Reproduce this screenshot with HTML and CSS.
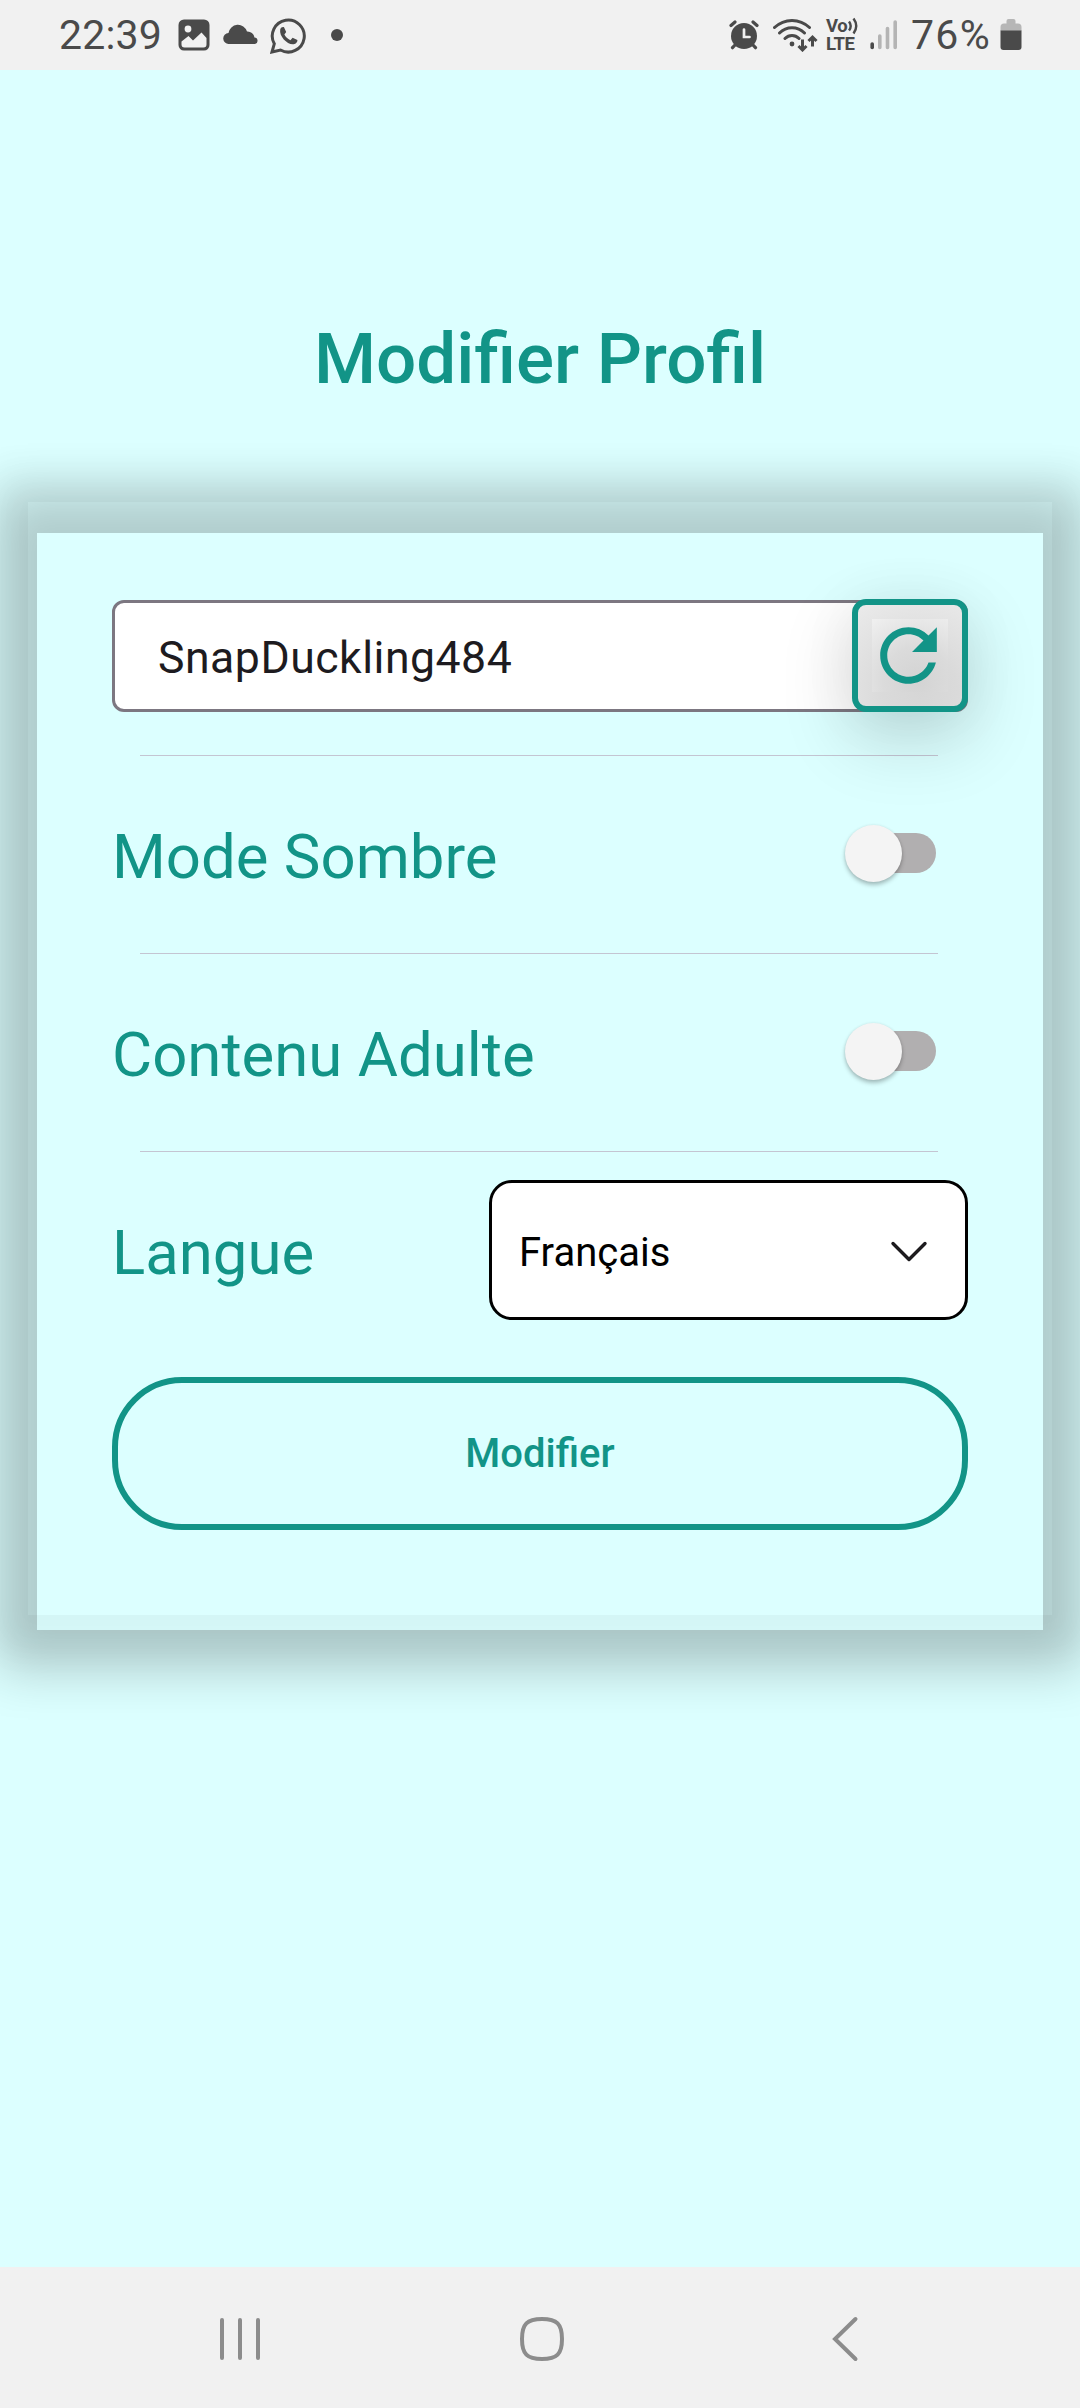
FILE: index.html
```html
<!DOCTYPE html>
<html lang="fr">
<head>
<meta charset="utf-8">
<title>Modifier Profil</title>
<link rel="stylesheet" href="styles.css">
</head>
<body>
<header class="status">
  <span class="clock">22:39</span>
  <svg class="ic-photo" width="32" height="32" viewBox="0 0 32 32"><rect x="0.5" y="0.5" width="31" height="31" rx="5.5" fill="#4a4a4a"/><circle cx="10" cy="10" r="3.4" fill="#f1f1f1"/><path d="M3.5 22.500l7-5.500 4.500 4.500 8.500-8 5 5.500v6.500a3 3 0 0 1-3 3h-19a3 3 0 0 1-3-3z" fill="#f1f1f1"/></svg>
  <svg class="ic-cloud" width="36" height="20" viewBox="0 0 36 20"><path d="M6 20a5.500 5.500 0 0 1-.5-11A9.500 9.500 0 0 1 24 7.500a7 7 0 0 1 7.500 6A3.300 3.300 0 0 1 32 20z" fill="#4a4a4a"/></svg>
  <svg class="ic-chat" width="37" height="37" viewBox="0 0 37 37"><path d="M2 35l2.300-8.200A16 16 0 1 1 10.500 33z" fill="none" stroke="#4a4a4a" stroke-width="3"/><path d="M10.200 12.500c.8-2.300 2.400-2.800 3.800-2.300l2.200 4.800-1.800 2.600c1.200 2.600 3.200 4.400 6 5.600l2.200-2.400 4.800 2.200c.4 1.800-1.200 3.800-3.800 4.200C17.500 28 9 19.500 10.200 12.500z" fill="#4a4a4a"/></svg>
  <span class="dot"></span>
  <span class="spacer"></span>
  <svg class="ic-alarm" width="30" height="30" viewBox="0 0 30 30"><g fill="none" stroke="#4a4a4a" stroke-width="3.200" stroke-linecap="round"><path d="M2 5.500l4-3.500M28 5.500l-4-3.500M6.500 24.500l-3 3.200M23.500 24.500l3 3.200"/></g><circle cx="15" cy="16" r="13" fill="#4a4a4a"/><path d="M15 9.500v7.500h5.500" fill="none" stroke="#f1f1f1" stroke-width="2.700" stroke-linecap="round"/></svg>
  <svg class="ic-wifi" width="45" height="34" viewBox="0 0 45 34"><g fill="none" stroke="#4a4a4a" stroke-width="3" stroke-linecap="round"><path d="M1.500 9.500c10-9.500 25-9.500 35 0M6.500 15c7-7 18-7 25 0M12 20.500c4-4 10-4 14 0"/><path d="M29.500 21.500v9.500M25.500 28l4 4 4-4M39.500 28.500V19M35.500 23l4-4 4 4" stroke-linecap="butt"/></g><circle cx="19" cy="26" r="2.400" fill="#4a4a4a"/></svg>
  <span class="volte"><span class="vo">Vo<svg width="11" height="18" viewBox="0 0 11 18"><path d="M1 4.500q3.400 4.500 0 9M5.500 1.500q5.500 7.500 0 15" fill="none" stroke="#4a4a4a" stroke-width="2.400"/></svg></span><span class="lte">LTE</span></span>
  <svg class="ic-signal" width="28" height="30" viewBox="0 0 28 30"><g stroke-width="3.600" stroke-linecap="round"><path d="M2.200 24v3.500" stroke="#4a4a4a"/><path d="M9.800 16v11.500M17.500 8.500v19M25.200 2v25.500" stroke="#b4b4b4"/></g></svg>
  <span class="percent">76%</span>
  <svg class="ic-battery" width="22" height="32" viewBox="0 0 22 32"><path d="M6.500 2q0-2 2-2h5q2 0 2 2v2.500h2.500q3.500 0 3.500 3.500v4H.5V8q0-3.500 3.500-3.500h2.500z" fill="#b6b6b6"/><path d="M.5 11.500h21V28q0 3-3 3h-15q-3 0-3-3z" fill="#4a4a4a"/></svg>
</header>

<main class="screen">
  <h1 class="title">Modifier Profil</h1>
  <section class="card-outer">
    <div class="card">
      <div class="name-row">
        <div class="name-field">SnapDuckling484</div>
        <button class="refresh" aria-label="Régénérer"><span class="refresh-inner"><svg width="85" height="85" viewBox="0 0 24 24"><path fill="#129487" d="M17.650 6.350A7.958 7.958 0 0 0 12 4c-4.420 0-7.990 3.580-7.990 8s3.570 8 7.990 8c3.730 0 6.840-2.550 7.730-6h-2.080A5.990 5.990 0 0 1 12 18c-3.310 0-6-2.690-6-6s2.690-6 6-6c1.660 0 3.140.69 4.220 1.780L13 11h7V4z"/></svg></span></button>
      </div>
      <hr class="divider">
      <div class="row"><span class="label">Mode Sombre</span><span class="switch"><span class="thumb"></span></span></div>
      <hr class="divider">
      <div class="row"><span class="label">Contenu Adulte</span><span class="switch"><span class="thumb"></span></span></div>
      <hr class="divider">
      <div class="row">
        <span class="label">Langue</span>
        <div class="select"><span>Français</span><svg width="38" height="24" viewBox="0 0 38 24"><path d="M3 3.500L19 19.500 35 3.500" fill="none" stroke="#1d1b1e" stroke-width="3.400" stroke-linecap="round" stroke-linejoin="round"/></svg></div>
      </div>
      <button class="submit">Modifier</button>
    </div>
  </section>
</main>

<nav class="navbar">
  <svg width="44" height="48" viewBox="0 0 44 48"><path d="M4 5v38M22 5v38M40 5v38" stroke="#8c8c8c" stroke-width="4" stroke-linecap="round"/></svg>
  <svg class="home" width="48" height="48" viewBox="0 0 48 48"><path d="M24 4c15 0 20 5 20 20s-5 20-20 20S4 39 4 24 9 4 24 4z" fill="none" stroke="#8c8c8c" stroke-width="4"/></svg>
  <svg width="30" height="48" viewBox="0 0 30 48"><path d="M25.500 4L5 24l20.500 20" fill="none" stroke="#8c8c8c" stroke-width="4" stroke-linecap="round"/></svg>
</nav>
</body>
</html>
```
FILE: styles.css
```css
* { box-sizing: border-box; }

body {
  margin: 0;
  width: 1080px;
  height: 2408px;
  display: flex;
  flex-direction: column;
  overflow: hidden;
  background: #dcffff;
  font-family: Roboto, "Liberation Sans", sans-serif;
}

svg { display: block; flex: none; }

/* Status bar */
.status {
  flex: none;
  height: 70px;
  display: flex;
  align-items: center;
  padding: 0 58px 0 59px;
  background: #f1f1f1;
  color: #4a4a4a;
}
.clock { width: 104px; font-size: 41px; line-height: 70px; letter-spacing: 0.2px; }
.ic-photo { margin-left: 15px; }
.ic-cloud { margin: 0 0 2px 13px; }
.ic-chat { margin-left: 11px; }
.dot { width: 12px; height: 12px; margin-left: 24px; border-radius: 50%; background: #4a4a4a; }
.spacer { flex: 1; }
.ic-wifi { margin-left: 14px; }
.volte { width: 34px; margin-left: 8px; font-weight: 700; font-size: 18.5px; }
.vo { display: flex; align-items: center; height: 17px; line-height: 17px; letter-spacing: -0.5px; }
.vo svg { margin-left: 1px; }
.lte { display: block; height: 18px; line-height: 19px; letter-spacing: -0.5px; }
.ic-signal { margin-left: 10px; }
.percent { width: 87px; margin-left: 13px; font-size: 41px; line-height: 70px; letter-spacing: 1.3px; }
.ic-battery { margin-left: 2px; }

/* Screen */
.screen { flex: 1; padding: 248px 28px 0; }
.title {
  margin: 0 0 102px;
  text-align: center;
  font-size: 71px;
  font-weight: 500;
  line-height: 82px;
  color: #129487;
}
.card-outer {
  height: 1113px;
  padding: 31px 9px 0;
  box-shadow: 0 2px 36px 32px rgba(0, 0, 0, 0.04);
}
.card {
  height: 1097px;
  padding: 66px 75px 0;
  box-shadow: 0 0 48px 40px rgba(0, 0, 0, 0.2);
}

.name-row { display: flex; height: 114px; align-items: flex-start; }
.name-field {
  flex: 1;
  height: 112px;
  margin: 1px -116px 0 0;
  padding: 2px 0 0 43px;
  border: 3px solid #7c7781;
  border-radius: 12px;
  background: #fff;
  color: #1d1b20;
  font-size: 44.6px;
  line-height: 106px;
  letter-spacing: 0.5px;
}
.refresh {
  display: flex;
  align-items: center;
  justify-content: center;
  width: 116px;
  height: 113px;
  padding: 0;
  border: 6px solid #129487;
  border-radius: 14px;
  background: radial-gradient(circle at 60% 85%, #d6d6d6 0, #dadada 35%, #ebebeb 100%);
  box-shadow: 0 26px 70px 4px rgba(0, 0, 0, 0.14), 0 4px 60px rgba(0, 0, 0, 0.05);
}
.refresh-inner {
  display: flex;
  align-items: center;
  justify-content: center;
  width: 76px;
  height: 73px;
  padding-right: 3px;
  background: radial-gradient(circle at 60% 85%, #d3d3d3 0, #dbdbdb 45%, #f0f0f0 100%);
}

.divider { height: 1px; margin: 0 30px 0 28px; border: 0; background: #c4c5d2; }
.name-row + .divider { margin-top: 42px; }
.row { display: flex; align-items: center; justify-content: space-between; height: 197px; }
.label { padding-top: 5px; font-size: 61.7px; line-height: 74px; color: #129487; }
.switch {
  display: flex;
  align-items: center;
  width: 80px;
  height: 40px;
  margin: 0 32px 3px 0;
  border-radius: 20px;
  background: #b1afb0;
}
.thumb {
  flex: none;
  width: 57px;
  height: 57px;
  margin-left: -11px;
  border-radius: 50%;
  background: #f4f4f4;
  box-shadow: 0 3px 4px rgba(0, 0, 0, 0.25), 0 0 3px rgba(0, 0, 0, 0.08);
}
.select {
  display: flex;
  align-items: center;
  justify-content: space-between;
  width: 479px;
  height: 140px;
  margin-bottom: 1px;
  padding: 4px 37px 0 27px;
  border: 3px solid #000;
  border-radius: 23px;
  background: #fff;
  color: #000;
  font-size: 40px;
}
.submit {
  display: block;
  width: 100%;
  height: 153px;
  margin-top: 28px;
  border: 6px solid #129487;
  border-radius: 70px;
  background: transparent;
  color: #129487;
  font: 500 40px/46px Roboto, "Liberation Sans", sans-serif;
}

/* Navigation bar */
.navbar {
  flex: none;
  height: 141px;
  display: flex;
  align-items: center;
  justify-content: space-between;
  padding: 2px 220px 0 218px;
  background: #f1f1f1;
}
.home { margin-right: 9px; }
```
